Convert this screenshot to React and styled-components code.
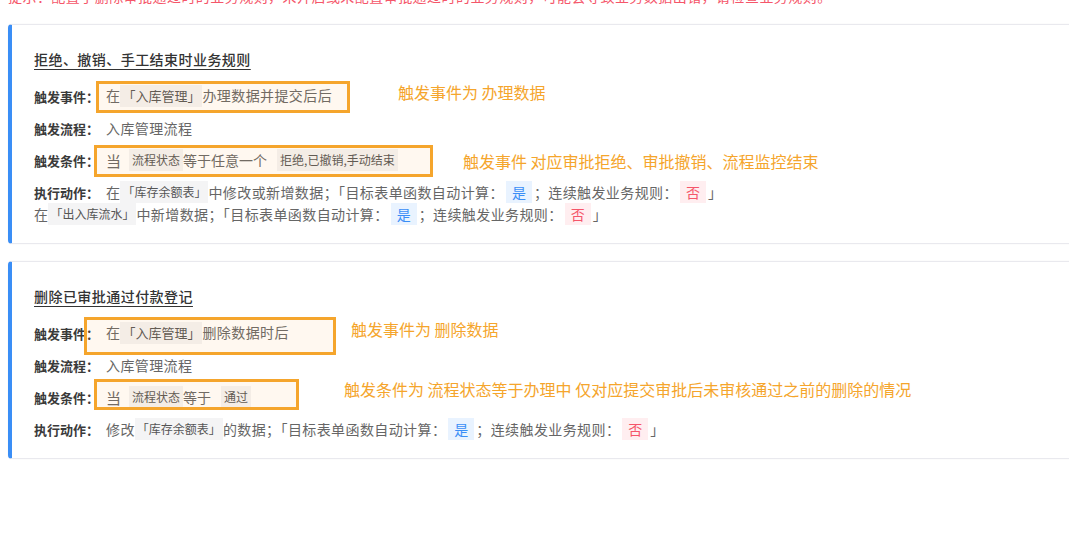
import React from "react";
import styled, { createGlobalStyle } from "styled-components";

const Global = createGlobalStyle`
  html, body {
    margin: 0;
    padding: 0;
    background: #fff;
    overflow: hidden;
  }
  body {
    font-family: "Noto Sans CJK SC", "Noto Sans", sans-serif;
    color: #333;
  }
`;

const Page = styled.div`
  padding-left: 8px;
  width: 1100px;
`;

const Tip = styled.div`
  margin-top: -15px;
  height: 22px;
  line-height: 22px;
  font-size: 14px;
  letter-spacing: 0.45px;
  color: #f5566a;
  white-space: nowrap;
  margin-bottom: 17px;
`;

const Card = styled.div`
  position: relative;
  box-sizing: border-box;
  border: 1px solid #e9e9ee;
  border-left: 4px solid #3a8ef6;
  border-radius: 4px;
  box-shadow: 0 0 2px rgba(0, 0, 0, 0.06);
  padding: 24px 0 18px 22px;
  margin-bottom: 17px;
  background: #fff;
`;

const Title = styled.div`
  font-size: 14px;
  line-height: 20px;
  font-weight: 500;
  letter-spacing: 0.45px;
  color: #333;
  text-decoration: underline;
  text-underline-offset: 4px;
  margin-bottom: 11px;
`;

const Row = styled.div`
  display: flex;
  align-items: center;
  height: 32px;
  font-size: 14px;
  letter-spacing: 0.4px;
  color: #666;
  white-space: nowrap;
`;

const Label = styled.span`
  font-size: 13px;
  letter-spacing: 0;
  font-weight: 600;
  color: #3a3a3a;
  margin-right: 7px;
`;

const Tag = styled.span`
  display: inline-block;
  vertical-align: top;
  background: #f4f4f5;
  color: #555;
  font-size: ${(p) => p.$size || 12}px;
  letter-spacing: 0;
  line-height: 22px;
  padding: 0 ${(p) => p.$pad ?? 3}px;
`;

const Word = styled.span`
  font-size: ${(p) => p.$size || 14}px;
  letter-spacing: 0;
  margin-right: ${(p) => p.$mr || 0}px;
`;

const Exec = styled.div`
  margin-top: 5px;
  font-size: 14px;
  letter-spacing: 0.4px;
  color: #666;
  white-space: nowrap;
`;

const Line = styled.div`
  height: 22px;
  line-height: 22px;
`;

const Flag = styled.span`
  display: inline-block;
  vertical-align: top;
  padding: 0 6px;
  margin: 0 2px;
  line-height: 22px;
  font-size: 14px;
  letter-spacing: 0;
  color: ${(p) => (p.$yes ? "#3a8ef6" : "#f5566a")};
  background: ${(p) => (p.$yes ? "#e9f3ff" : "#ffeef0")};
`;

const Mark = styled.div`
  position: absolute;
  box-sizing: border-box;
  left: ${(p) => p.$x}px;
  top: ${(p) => p.$y}px;
  width: ${(p) => p.$w}px;
  height: ${(p) => p.$h}px;
  border: 3px solid #f5a52c;
  background: rgba(255, 170, 60, 0.08);
  pointer-events: none;
`;

const Note = styled.div`
  position: absolute;
  left: ${(p) => p.$x}px;
  top: ${(p) => p.$y}px;
  font-size: 16px;
  line-height: 22px;
  color: #f5a52c;
  white-space: nowrap;
`;

function ExecLine({ first, table, pre, post }) {
  return (
    <Line>
      {first && <Label>执行动作：</Label>}
      {pre}
      <Tag $pad={2}>「{table}」</Tag>
      {post}；「目标表单函数自动计算：
      <Flag $yes>是</Flag>；连续触发业务规则：
      <Flag>否</Flag>」
    </Line>
  );
}

export default function App() {
  return (
    <Page>
      <Global />
      <Tip>
        提示：配置了删除审批通过时的业务规则，未开启或未配置审批通过时的业务规则，可能会导致业务数据出错，请检查业务规则。
      </Tip>

      <Card>
        <Title>拒绝、撤销、手工结束时业务规则</Title>
        <Row>
          <Label>触发事件：</Label>
          <span>
            在<Tag $size={13} $pad={2}>「入库管理」</Tag>办理数据并提交后后
          </span>
        </Row>
        <Row>
          <Label>触发流程：</Label>
          <span>入库管理流程</span>
        </Row>
        <Row>
          <Label>触发条件：</Label>
          <Word $size={15} $mr={8}>当</Word>
          <Tag>流程状态</Tag>
          <Word $mr={10}>等于任意一个</Word>
          <Tag>拒绝,已撤销,手动结束</Tag>
        </Row>
        <Exec>
          <ExecLine first table="库存余额表" pre="在" post="中修改或新增数据" />
          <ExecLine table="出入库流水" pre="在" post="中新增数据" />
        </Exec>

        <Mark $x={84} $y={56} $w={254} $h={32} />
        <Mark $x={82} $y={120} $w={339} $h={32} />
        <Note $x={386} $y={56}>触发事件为 办理数据</Note>
        <Note $x={451} $y={125}>触发事件 对应审批拒绝、审批撤销、流程监控结束</Note>
      </Card>

      <Card>
        <Title>删除已审批通过付款登记</Title>
        <Row>
          <Label>触发事件：</Label>
          <span>
            在<Tag $size={13} $pad={2}>「入库管理」</Tag>删除数据时后
          </span>
        </Row>
        <Row>
          <Label>触发流程：</Label>
          <span>入库管理流程</span>
        </Row>
        <Row>
          <Label>触发条件：</Label>
          <Word $size={15} $mr={8}>当</Word>
          <Tag>流程状态</Tag>
          <Word $mr={10}>等于</Word>
          <Tag>通过</Tag>
        </Row>
        <Exec>
          <ExecLine first table="库存余额表" pre="修改" post="的数据" />
        </Exec>

        <Mark $x={72} $y={55} $w={252} $h={38} />
        <Mark $x={82} $y={117} $w={205} $h={31} />
        <Note $x={339} $y={56}>触发事件为 删除数据</Note>
        <Note $x={332} $y={116}>
          触发条件为 流程状态等于办理中 仅对应提交审批后未审核通过之前的删除的情况
        </Note>
      </Card>
    </Page>
  );
}
